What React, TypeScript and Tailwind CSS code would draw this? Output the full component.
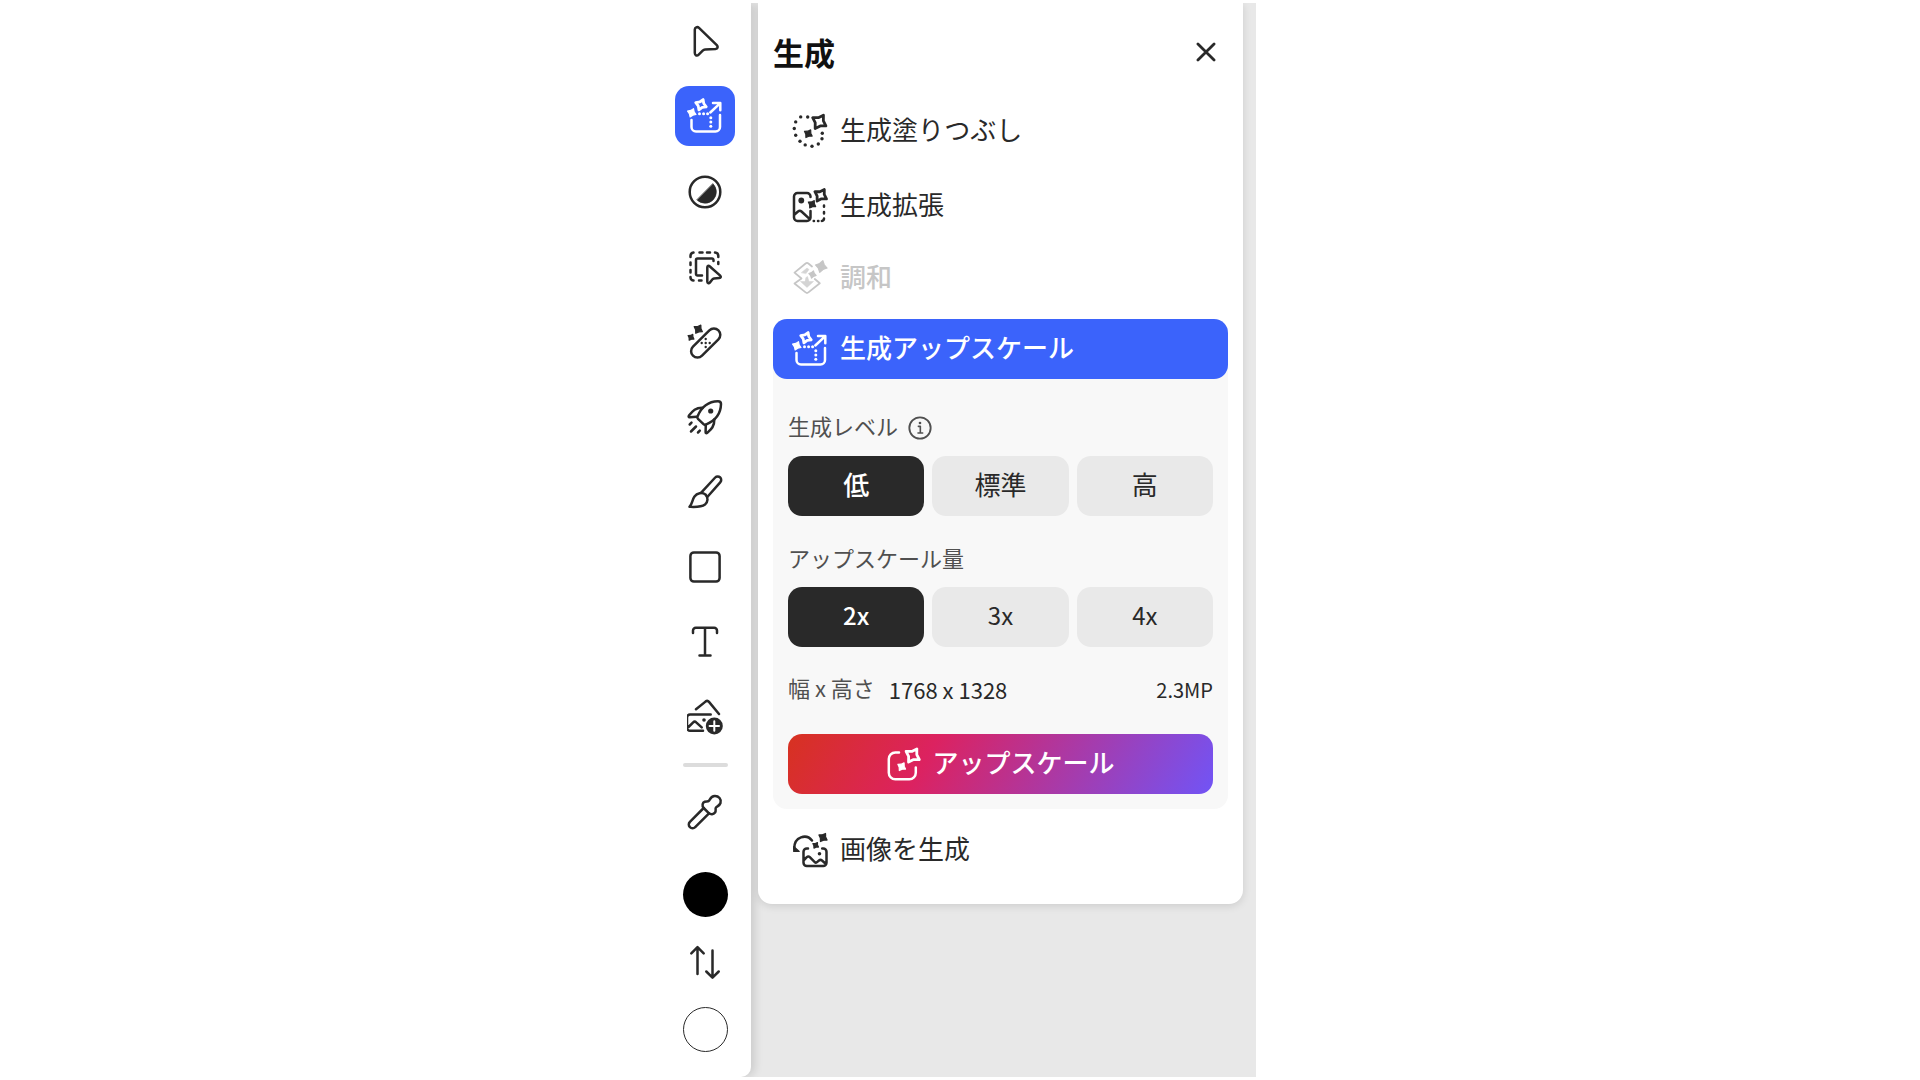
import React, { useState } from 'react';

function Icon({ children, className = 'size-9 shrink-0' }: { children: React.ReactNode; className?: string }) {
  return (
    <svg
      viewBox="0 0 36 36"
      className={className}
      fill="none"
      stroke="currentColor"
      strokeWidth="2.5"
      strokeLinecap="round"
      strokeLinejoin="round"
      aria-hidden="true"
    >
      {children}
    </svg>
  );
}

function Star({ x, y, r, open = false, angle = 32 }: { x: number; y: number; r: number; open?: boolean; angle?: number }) {
  const k = r * (open ? 0.38 : 0.4);
  return (
    <path
      d={`M0 ${-r}L${k} ${-k}L${r} 0L${k} ${k}L0 ${r}L${-k} ${k}L${-r} 0L${-k} ${-k}Z`}
      transform={`translate(${x} ${y}) rotate(${angle})`}
      fill={open ? 'none' : 'currentColor'}
      strokeWidth={open ? 2.8 : 1.2}
    />
  );
}

function Dots({ at, r = 1.4 }: { at: number[][]; r?: number }) {
  return (
    <>
      {at.map(([x, y]) => (
        <circle key={`${x}-${y}`} cx={x} cy={y} r={r} fill="currentColor" stroke="none" />
      ))}
    </>
  );
}

const Cursor = () => (
  <Icon>
    <path d="M7.800 6.500v23.600c0 2.600 2.300 3.200 3.900 1.600l4-4c.800-.800 1.400-1.100 2.400-1.200l10.400-.600c2.300-.200 2.800-2.200 1.300-3.800L12 4.900C10.300 3.300 7.800 4.400 7.800 6.500z" />
  </Icon>
);

const Upscale = () => (
  <Icon>
    <path d="M4.500 22v7a4.500 4.500 0 0 0 4.500 4.500h19.500a4.500 4.500 0 0 0 4.500-4.500V17" />
    <path d="M23.300 14.500 33 5.300M26 5h7.300v7.300" />
    <Dots r={1.5} at={[[12.500, 15.700], [16.600, 15.700], [20.600, 15.700], [23.800, 19.700], [23.800, 24], [23.800, 28.300]]} />
    <Star x={14} y={6.700} r={5.600} open angle={22} />
    <Star x={4.800} y={14.800} r={4.500} angle={22} />
  </Icon>
);

const Contrast = () => (
  <Icon>
    <circle cx="18" cy="18" r="15.300" />
    <path d="M26 9.800A11.300 11.300 0 0 1 10 26z" fill="currentColor" strokeWidth="0.600" />
  </Icon>
);

const SelectObject = () => (
  <Icon>
    <path d="M3.500 8V7a3.500 3.500 0 0 1 3-3.400M12.500 3.500h3M20 3.500h3M28 3.600a3.500 3.500 0 0 1 3.300 3.400v1M31.300 13v2M3.500 13.500v2.500M3.500 21v2.500M3.500 28v.500a3 3 0 0 0 3 3M12 31.500h2.500" />
    <path d="M26.500 12v-1a1.500 1.500 0 0 0-1.500-1.500H10.500A1.500 1.500 0 0 0 9 11v14a1.500 1.500 0 0 0 1.500 1.500H15" />
    <path d="M20.300 18.500v14c0 1.500 1.500 2.200 2.500 1.100l2.700-3.300c.400-.500.900-.700 1.500-.800l5.300-.400c1.600-.100 2-1.500.900-2.500l-10.600-9.400c-1-.900-2.300-.300-2.300 1.300z" />
  </Icon>
);

const Heal = () => (
  <Icon>
    <rect x="0.700" y="12.600" width="36" height="12.800" rx="6.400" transform="rotate(-45 18.700 19)" />
    <Dots r={1.200} at={[[14.700, 19], [18.700, 15], [22.700, 19], [18.700, 23], [18.700, 19]]} />
    <Star x={11.300} y={5.200} r={4.800} />
    <Star x={4} y={13.300} r={3.400} />
  </Icon>
);

const Rocket = () => (
  <Icon>
    <path d="M10.500 17.500C14 9 20 2.500 31 2.300c2.300 0 3 .700 3 2.800-.200 10.500-6.500 17-15.200 20.600-1 .400-1.600.200-2.300-.500l-5.500-5.400c-.700-.700-.900-1.300-.500-2.300z" />
    <path d="M15.500 8.800C8 8.500 5 13 2 16.500c-.700.900-.400 1.800.700 1.700l7-.5M27.300 20.500c.300 7.500-4 10.500-7 13.300-.900.700-1.800.400-1.700-.700l.200-7.400" />
    <circle cx="23.700" cy="12" r="2.600" fill="currentColor" stroke="none" />
    <path d="M2.700 25.500 4.500 23.700M4 32.500l5-5M11 33.500l1.800-1.800" />
  </Icon>
);

const Brush = () => (
  <Icon>
    <path d="M2.500 32.800C5.500 29.500 5 26 7.500 22.500c2.500-3.500 7.500-4.500 11-2 3 3 2.500 7.500-.5 10-4 3-10 2.500-15.500 2.300z" />
    <path d="M14 18.800 28.200 3.500a3.500 3.500 0 0 1 5 4.900L20.300 23" />
  </Icon>
);

const Shape = () => (
  <Icon>
    <rect x="3.400" y="3.400" width="29.200" height="29.200" rx="3.500" />
  </Icon>
);

const TypeTool = () => (
  <Icon>
    <path d="M6 9V6.500a2.800 2.800 0 0 1 2.800-2.800h18.400a2.800 2.800 0 0 1 2.800 2.800V9M18 4v27.600M12.500 31.600h11" />
  </Icon>
);

const AddImage = () => (
  <Icon>
    <path d="m9 10.300 9.500-7.700c1.300-1 2.500-.9 3.500.300L32 15" />
    <path d="M23.700 15.500H3A3 3 0 0 0 0 18.500v10.200a3 3 0 0 0 3 3h13M1.500 28l4.700-4.700c1-1 2-1 3 0l5.500 5" />
    <circle cx="17" cy="21" r="1.800" fill="currentColor" stroke="none" />
    <circle cx="27.300" cy="27" r="8.500" fill="currentColor" stroke="none" />
    <path d="M27.300 22.300v9.400M22.600 27h9.400" stroke="#fff" strokeWidth="2" />
  </Icon>
);

const Eyedropper = () => (
  <Icon>
    <path d="M16.700 14 2.900 27.800a3.700 3.700 0 0 0 5.300 5.300L22 19.300" />
    <path d="M16.700 14c-2-2.300-1.200-5.600 1-6.300 1.500-.500 3.200 0 4-.7 1.500-1 1.600-4.800 6-5 4-.2 7 3.300 5.800 7-1 3.200-4.300 3.300-4.800 5-.4 1.500.600 3-.700 4.600-1.500 2-4.300 2-6 .7z" />
  </Icon>
);

const Swap = () => (
  <Icon>
    <path d="M10.500 30V4M4.300 9.300l6.200-6.200 6.200 6.200M25.500 6.500V33M19.300 27.500l6.200 6.200 6.200-6.200" />
  </Icon>
);

const Fill = () => (
  <Icon>
    <Dots r={1.700} at={[[8.700, 3.900], [15.700, 4], [3.700, 8.900], [2.300, 15.500], [3.700, 22.300], [8, 28.300], [13.200, 31.900], [20, 33.200], [26.300, 31], [30, 25.700], [30.300, 20.300]]} />
    <Star x={27.300} y={8.800} r={7.800} open />
    <Star x={16.300} y={20.700} r={4.500} />
  </Icon>
);

const Expand = () => (
  <Icon>
    <path d="M18.500 9V8.500A3.500 3.500 0 0 0 15 5H5.500A3.500 3.500 0 0 0 2 8.500v21A3.500 3.500 0 0 0 5.500 33H15a3.500 3.500 0 0 0 3.500-3.500V23M2 27l4-3.500c1.200-1 2.400-1 3.500 0l8.300 7.700" />
    <circle cx="9.300" cy="12.500" r="2.900" fill="currentColor" stroke="none" />
    <path d="M32 17.500v1.300M32 24v1.500M32 30.500c0 1.300-.8 2.300-2.200 2.400M21.700 33h.3M26 33h.4" />
    <Star x={28.700} y={7.300} r={6.800} open />
    <Star x={20} y={16.300} r={4.300} />
  </Icon>
);

const Harmonize = () => (
  <Icon>
    <path d="m20 6.500-3.600-3c-1-.8-1.800-.8-2.800 0L2.500 12.600 9.500 18.500 2.500 23.500l11.100 8.900c1 .8 1.800.8 2.800 0l11.400-9.200-5-4.200" strokeWidth="1.800" />
    <path d="m9.500 12.500 5.500-4.500 2 1.500-3 4zM14 17.500l1.500-1 1.500 5h4.500L15 27.500 8.500 21.500H13z" fill="currentColor" strokeWidth="0.500" opacity=".75" />
    <Star x={29.300} y={6.500} r={6} angle={15} />
    <Star x={20.500} y={14.500} r={3.700} angle={15} />
  </Icon>
);

const Generate = () => (
  <Icon>
    <path d="M13 6.500H9.300a6.500 6.500 0 0 0-6.500 6.500v13.800a6.500 6.500 0 0 0 6.500 6.500h14a6.500 6.500 0 0 0 6.500-6.500V21.500" />
    <Star x={26.700} y={9.500} r={7.800} open />
    <Star x={15.700} y={20.700} r={4.500} />
  </Icon>
);

const GenerateImage = () => (
  <Icon>
    <path d="M20 8.500C14.500 1.500 2 4.500 2.300 16.500" />
    <path d="M1.700 14.500v5h5.500z" fill="currentColor" strokeWidth="1.200" />
    <path d="M16 16.500h-1.200a3.300 3.300 0 0 0-3.300 3.300v11a3.300 3.300 0 0 0 3.300 3.300h16.400a3.300 3.300 0 0 0 3.300-3.300v-11a3.300 3.300 0 0 0-3.300-3.300h-1M12 28l2.800-2.800c1-1 2-1 3 0l4.700 4.600c1 1 2 .9 2.800.100l1.700-1.400c1-.8 2-.8 3 0l4 3.500" />
    <circle cx="27.500" cy="21.800" r="1.800" fill="currentColor" stroke="none" />
    <Star x={31} y={5.500} r={4.800} />
    <Star x={23.700} y={13.300} r={3.300} />
  </Icon>
);

const upperTools = [
  { label: '調整', icon: <Contrast /> },
  { label: '選択範囲', icon: <SelectObject /> },
  { label: '修復', icon: <Heal /> },
  { label: 'クイックアクション', icon: <Rocket /> },
  { label: 'ブラシ', icon: <Brush /> },
  { label: 'シェイプ', icon: <Shape /> },
  { label: 'テキスト', icon: <TypeTool /> },
  { label: '画像を追加', icon: <AddImage /> },
];

function Tool({ label, children, active = false }: { label: string; children: React.ReactNode; active?: boolean }) {
  return (
    <button
      type="button"
      aria-label={label}
      aria-pressed={active}
      className={`flex size-[60px] shrink-0 items-center justify-center rounded-[14px] ${active ? 'bg-[#3b63fb] text-white' : ''}`}
    >
      {children}
    </button>
  );
}

function MenuItem({ icon, label, className, disabled = false }: { icon: React.ReactNode; label: string; className: string; disabled?: boolean }) {
  return (
    <button
      type="button"
      disabled={disabled}
      className={`flex w-full items-center gap-3 rounded-[14px] px-[19px] text-left text-[26px] leading-9 ${className}`}
    >
      {icon}
      <span className="pb-1">{label}</span>
    </button>
  );
}

function Segments({ label, options, textSize }: { label: string; options: string[]; textSize: string }) {
  const [value, setValue] = useState(options[0]);
  return (
    <div role="group" aria-label={label} className="grid grid-cols-3 gap-2">
      {options.map((option) => (
        <button
          key={option}
          type="button"
          aria-pressed={value === option}
          onClick={() => setValue(option)}
          className={`h-[60px] rounded-[14px] pb-1 leading-9 ${textSize} ${
            value === option ? 'bg-[#292929] font-medium text-white' : 'bg-[#e9e9e9] text-[#292929]'
          }`}
        >
          {option}
        </button>
      ))}
    </div>
  );
}

export default function App() {
  return (
    <div lang="ja" className="flex min-h-screen justify-center bg-white py-[3px] font-['Noto_Sans_CJK_JP',sans-serif] text-[#292929]">
      <div className="flex w-full max-w-[592px] overflow-hidden bg-[#e8e8e8]">
        <nav
          aria-label="ツール"
          className="flex shrink-0 flex-col items-center rounded-br-[10px] bg-white pt-2 pr-4 pb-[18px] pl-[11px] shadow-[4px_0_8px_rgba(0,0,0,0.12)]"
        >
          <Tool label="移動">
            <Cursor />
          </Tool>
          <div className="mt-[15px]">
            <Tool label="生成" active>
              <Upscale />
            </Tool>
          </div>
          <div className="mt-4 flex flex-col gap-[15px]">
            {upperTools.map((tool) => (
              <Tool key={tool.label} label={tool.label}>
                {tool.icon}
              </Tool>
            ))}
          </div>
          <div className="mt-4 h-1 w-[45px] rounded-full bg-[#dcdcdc]" />
          <div className="mt-[15px] flex flex-col items-center">
            <Tool label="スポイト">
              <Eyedropper />
            </Tool>
            <button type="button" aria-label="描画色" className="mt-[30px] size-[45px] rounded-full bg-black" />
            <div className="my-[15px]">
              <Tool label="色を入れ替え">
                <Swap />
              </Tool>
            </div>
            <button type="button" aria-label="背景色" className="size-[45px] rounded-full border border-[#292929] bg-white" />
          </div>
        </nav>

        <main className="relative min-w-0 flex-1 pr-[13px] pl-[7px]">
          <section className="rounded-b-[14px] bg-white px-[15px] pb-[17px] shadow-[0_2px_8px_rgba(0,0,0,0.12)]">
            <header className="flex h-[91px] items-center justify-between pt-1.5 pr-3">
              <h1 className="text-[31px] leading-10 font-bold text-[#111]">生成</h1>
              <button type="button" aria-label="閉じる">
                <Icon className="size-5">
                  <path d="M3.500 3.500 32.500 32.500M32.500 3.500 3.500 32.500" strokeWidth="5" />
                </Icon>
              </button>
            </header>

            <MenuItem icon={<Fill />} label="生成塗りつぶし" className="h-[74px]" />
            <MenuItem icon={<Expand />} label="生成拡張" className="h-[76px]" />
            <MenuItem icon={<Harmonize />} label="調和" className="h-[68px] font-medium text-[#c6c6c6]" disabled />

            <div className="mt-[7px] rounded-[14px] bg-[#f8f8f8]">
              <MenuItem icon={<Upscale />} label="生成アップスケール" className="h-[60px] bg-[#3b63fb] font-medium text-white" />
              <div className="px-[15px] pt-8 pb-[15px]">
                <div className="flex h-[45px] items-start gap-2.5 text-[#505050]">
                  <span className="text-[22px] leading-7">生成レベル</span>
                  <button type="button" aria-label="生成レベルについて" className="pt-[5px]">
                    <Icon className="size-6">
                      <circle cx="18" cy="18" r="16" strokeWidth="2.800" />
                      <path d="M15.500 15.500H18.500V25.500M15 25.500h7" strokeWidth="2.400" />
                      <circle cx="18" cy="10.500" r="2" fill="currentColor" stroke="none" />
                    </Icon>
                  </button>
                </div>
                <Segments label="生成レベル" options={['低', '標準', '高']} textSize="text-[26px]" />
                <div className="pt-[27px] pb-4 text-[22px] leading-7 text-[#505050]">アップスケール量</div>
                <Segments label="アップスケール量" options={['2x', '3x', '4x']} textSize="text-[24px]" />
                <div className="flex h-[87px] items-center">
                  <span className="pb-2 text-[22px] leading-8 text-[#505050]">幅 x 高さ</span>
                  <span className="ml-[14px] pb-1 text-[22px] leading-8">1768 x 1328</span>
                  <span className="ml-auto pb-0.5 text-[20px] leading-8">2.3MP</span>
                </div>
                <button
                  type="button"
                  className="flex h-[60px] w-full items-center justify-center gap-2.5 rounded-[14px] bg-[linear-gradient(120deg,#d73220_0%,#dc2260_33%,#7154f6_100%)] text-[26px] leading-9 font-medium text-white"
                >
                  <Generate />
                  <span className="pb-1">アップスケール</span>
                </button>
              </div>
            </div>

            <MenuItem icon={<GenerateImage />} label="画像を生成" className="mt-1 h-[74px]" />
          </section>
        </main>
      </div>
    </div>
  );
}
